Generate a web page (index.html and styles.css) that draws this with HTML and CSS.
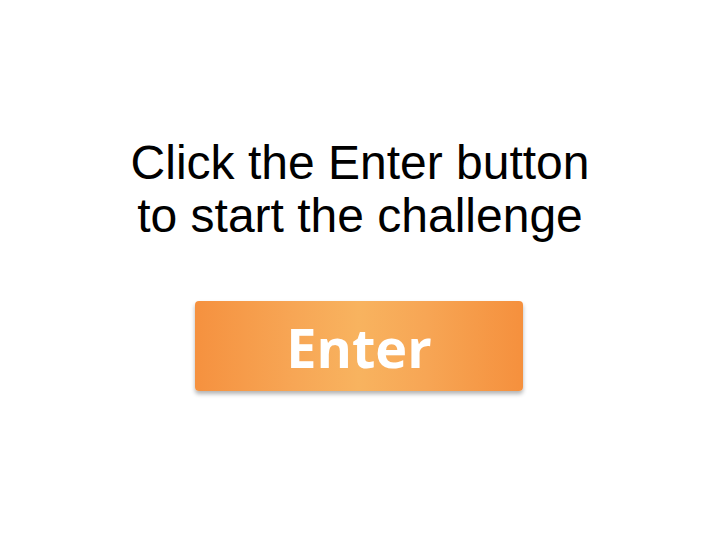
FILE: index.html
```html
<!DOCTYPE html>
<html>
<head>
<meta charset="utf-8">
<link rel="stylesheet" href="styles.css">
</head>
<body>
<main class="page">
  <p class="prompt">Click the Enter button<br>to start the challenge</p>
  <button class="enter">Enter</button>
</main>
</body>
</html>
```
FILE: styles.css
```css
html, body {
  margin: 0;
  padding: 0;
  background: #ffffff;
}
.page {
  width: 720px;
  height: 540px;
  display: flex;
  flex-direction: column;
  align-items: center;
}
.prompt {
  margin: 136px 0 0 0;
  font-family: "Liberation Sans", Arial, sans-serif;
  font-size: 48px;
  line-height: 53px;
  color: #000;
  text-align: center;
}
.enter {
  margin-top: 59px;
  margin-left: -2px;
  width: 328px;
  height: 90px;
  border: none;
  border-radius: 4px;
  background: linear-gradient(to right, #f5913f 0%, #f7a655 30%, #f8b35f 50%, #f7a655 70%, #f5903d 100%);
  box-shadow: 0 3px 4px rgba(0, 0, 0, 0.3);
  color: #fff;
  font-family: "Open Sans", sans-serif;
  font-weight: 700;
  font-size: 54px;
  padding: 2px 0 0 0;
  line-height: 88px;
}
```
